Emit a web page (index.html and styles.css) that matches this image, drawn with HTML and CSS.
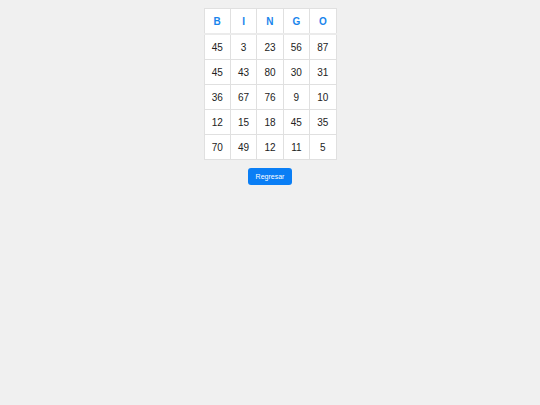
FILE: index.html
```html
<!DOCTYPE html>
<html lang="es">
<head>
    <meta charset="UTF-8">
    <meta name="viewport" content="width=device-width, initial-scale=1.0">
    <title>Bingo</title>
    <link rel="stylesheet" href="styles.css">
</head>
<body>

    <div class="container">
        <!-- Carton de bingo -->
        <table class="bingo-card">
            <thead>
                <tr>
                    <th>B</th>
                    <th>I</th>
                    <th>N</th>
                    <th>G</th>
                    <th>O</th>
                </tr>
            </thead>
            <tbody>
                <tr><td>45</td><td>3</td><td>23</td><td>56</td><td>87</td></tr>
                <tr><td>45</td><td>43</td><td>80</td><td>30</td><td>31</td></tr>
                <tr><td>36</td><td>67</td><td>76</td><td>9</td><td>10</td></tr>
                <tr><td>12</td><td>15</td><td>18</td><td>45</td><td>35</td></tr>
                <tr><td>70</td><td>49</td><td>12</td><td>11</td><td>5</td></tr>
            </tbody>
        </table>

        <button class="back-btn">Regresar</button>
    </div>

</body>
</html>
```

FILE: styles.css
```css
body {
    font-family: "Liberation Sans", Arial, sans-serif;
    margin: 0;
    padding: 0;
    background-color: #f0f0f0;
    color: #222;
}

.container {
    display: flex;
    flex-direction: column;
    align-items: center;
    padding-top: 8px;
}

.bingo-card {
    border-collapse: collapse;
    background-color: #fff;
    table-layout: fixed;
    width: 133px;
}

.bingo-card th,
.bingo-card td {
    border: 1px solid #e0e0e0;
    height: 24px;
    padding: 0;
    text-align: center;
    font-size: 10px;
}

.bingo-card th {
    color: #1a85ec;
    font-weight: bold;
    border-bottom: 2px solid #ebebeb;
}

.back-btn {
    margin-top: 8px;
    width: 44px;
    height: 17px;
    padding: 0;
    background-color: #0a7ef5;
    color: #fff;
    border: none;
    border-radius: 3px;
    font-family: "Liberation Sans", Arial, sans-serif;
    font-size: 7px;
    cursor: pointer;
}
```
